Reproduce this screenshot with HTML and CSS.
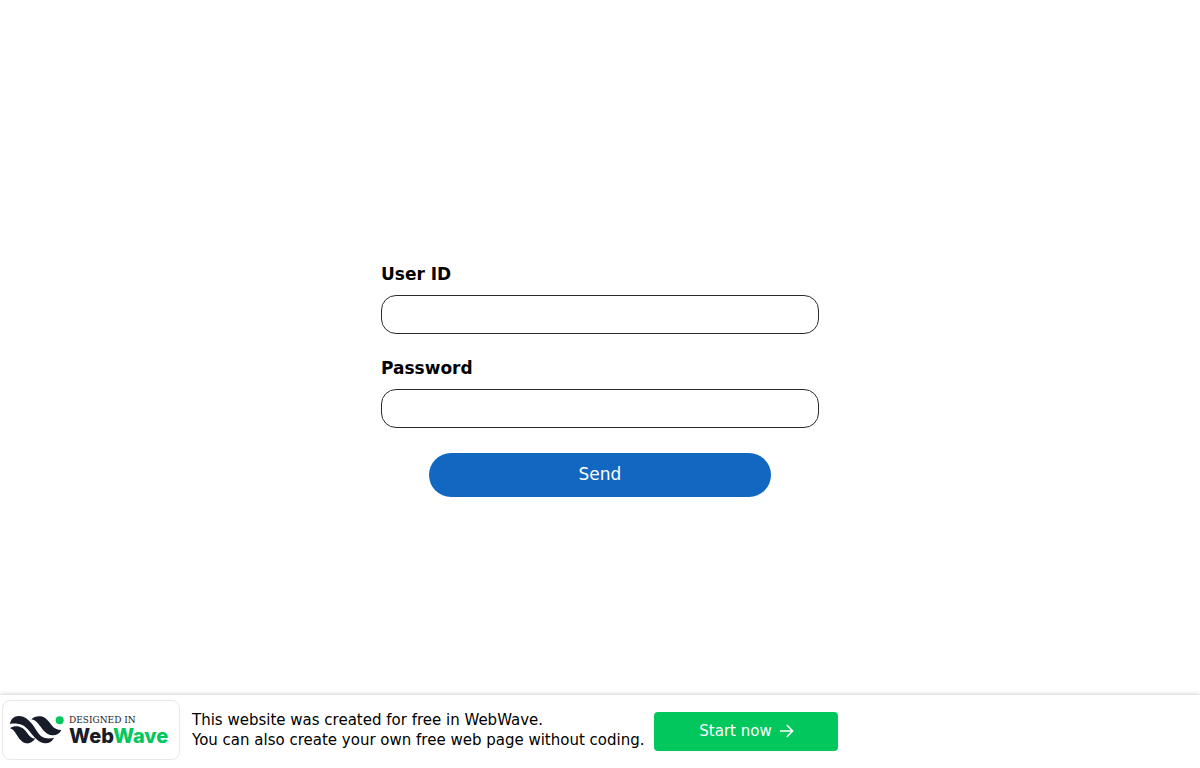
FILE: index.html
```html
<!DOCTYPE html>
<html lang="en">
<head>
<meta charset="utf-8">
<meta name="viewport" content="width=device-width, initial-scale=1">
<title>Login</title>
<link rel="stylesheet" href="styles.css">
</head>
<body>
<main class="page">
  <form class="login">
    <div class="field">
      <label class="label" for="user">User ID</label>
      <input class="input" id="user" type="text">
    </div>
    <div class="field">
      <label class="label" for="password">Password</label>
      <input class="input" id="password" type="password">
    </div>
    <button class="send" type="submit">Send</button>
  </form>
</main>
<footer class="banner">
  <a class="brand" href="#">
    <svg class="brand-mark" viewBox="0 0 165 90" width="55" height="30" aria-hidden="true">
      <g fill="#181b28">
        <path d="M0 27C2 12 12 3 27 3C45 4 55 14 68 29C80 45 88 65 105 69C114 71 122 71 132 68C126 80 116 86 104 85C85 83 73 67 61 52C49 37 40 29 26 27C15 25 7 25 0 27Z"/>
        <path d="M64 13C72 5 82 2 93 4C108 7 116 19 125 31C133 41 141 45 154 45C148 57 138 62 127 61C109 59 100 46 90 33C82 22 76 15 64 13Z"/>
        <path d="M0 40C8 34 18 33 28 35C44 39 51 54 59 63C64 69 69 71 76 70C69 81 60 86 50 85C34 83 26 68 18 56C13 48 8 42 0 40Z"/>
      </g>
      <circle cx="149" cy="16" r="12" fill="#02c75c"/>
    </svg>
    <span class="brand-text">
      <span class="brand-note">DESIGNED IN</span>
      <span class="brand-name">Web<span class="brand-green">Wave</span></span>
    </span>
  </a>
  <p class="message">This website was created for free in WebWave.<br>You can also create your own free web page without coding.</p>
  <a class="start" href="#">Start now
    <svg width="14" height="14" viewBox="0 0 14 14" fill="none" stroke="currentColor" stroke-width="1.6" aria-hidden="true"><path d="M0 7H12.5M6.8 1L12.6 7L6.8 13"/></svg>
  </a>
</footer>
</body>
</html>
```
FILE: styles.css
```css
* { box-sizing: border-box; }

body {
  margin: 0;
  min-height: 100vh;
  display: flex;
  flex-direction: column;
  background: #fff;
  color: #000;
  font-family: "DejaVu Sans", sans-serif;
}

.page {
  flex: 1;
  display: flex;
  justify-content: center;
  align-items: center;
  padding: 66px 16px 0;
}

.login {
  width: 100%;
  max-width: 438px;
  display: flex;
  flex-direction: column;
}

.field {
  display: flex;
  flex-direction: column;
  gap: 11px;
}

.field + .field { margin-top: 24px; }

.label {
  font-size: 17px;
  font-weight: 700;
  line-height: 20px;
}

.input {
  width: 100%;
  height: 39px;
  padding: 0 14px;
  border: 1px solid #2b2b2f;
  border-radius: 15px;
  background: #fff;
  font: inherit;
}

.send {
  align-self: center;
  width: 78%;
  height: 44px;
  margin-top: 25px;
  padding: 0 0 2px;
  border: 0;
  border-radius: 22px;
  background: #1267c1;
  color: #fff;
  font: inherit;
  font-size: 17px;
}

.banner {
  display: flex;
  align-items: center;
  padding: 5px 2px 8px;
  background: #fff;
  box-shadow: 0 0 5px rgba(0, 0, 0, 0.25);
}

.brand {
  display: flex;
  align-items: center;
  gap: 4px;
  width: 178px;
  height: 60px;
  padding: 0 7px;
  border: 1px solid #e8e8e8;
  border-radius: 8px;
  color: #181b28;
  text-decoration: none;
}

.brand-mark { flex: none; }

.brand-text {
  display: flex;
  flex-direction: column;
  padding-top: 2px;
}

.brand-note {
  font-family: "DejaVu Serif", serif;
  font-size: 9px;
  line-height: 10px;
}

.brand-name {
  font-family: Inter, sans-serif;
  font-size: 20px;
  font-weight: 800;
  line-height: 23px;
}

.brand-green { color: #02c75c; }

.message {
  margin: 0 10px 0 12px;
  font-size: 15px;
  line-height: 20px;
}

.start {
  display: flex;
  align-items: center;
  justify-content: center;
  gap: 8px;
  width: 184px;
  height: 39px;
  margin-top: 2px;
  border-radius: 4px;
  background: #02c75c;
  color: #fff;
  font-size: 15px;
  text-decoration: none;
}
```
